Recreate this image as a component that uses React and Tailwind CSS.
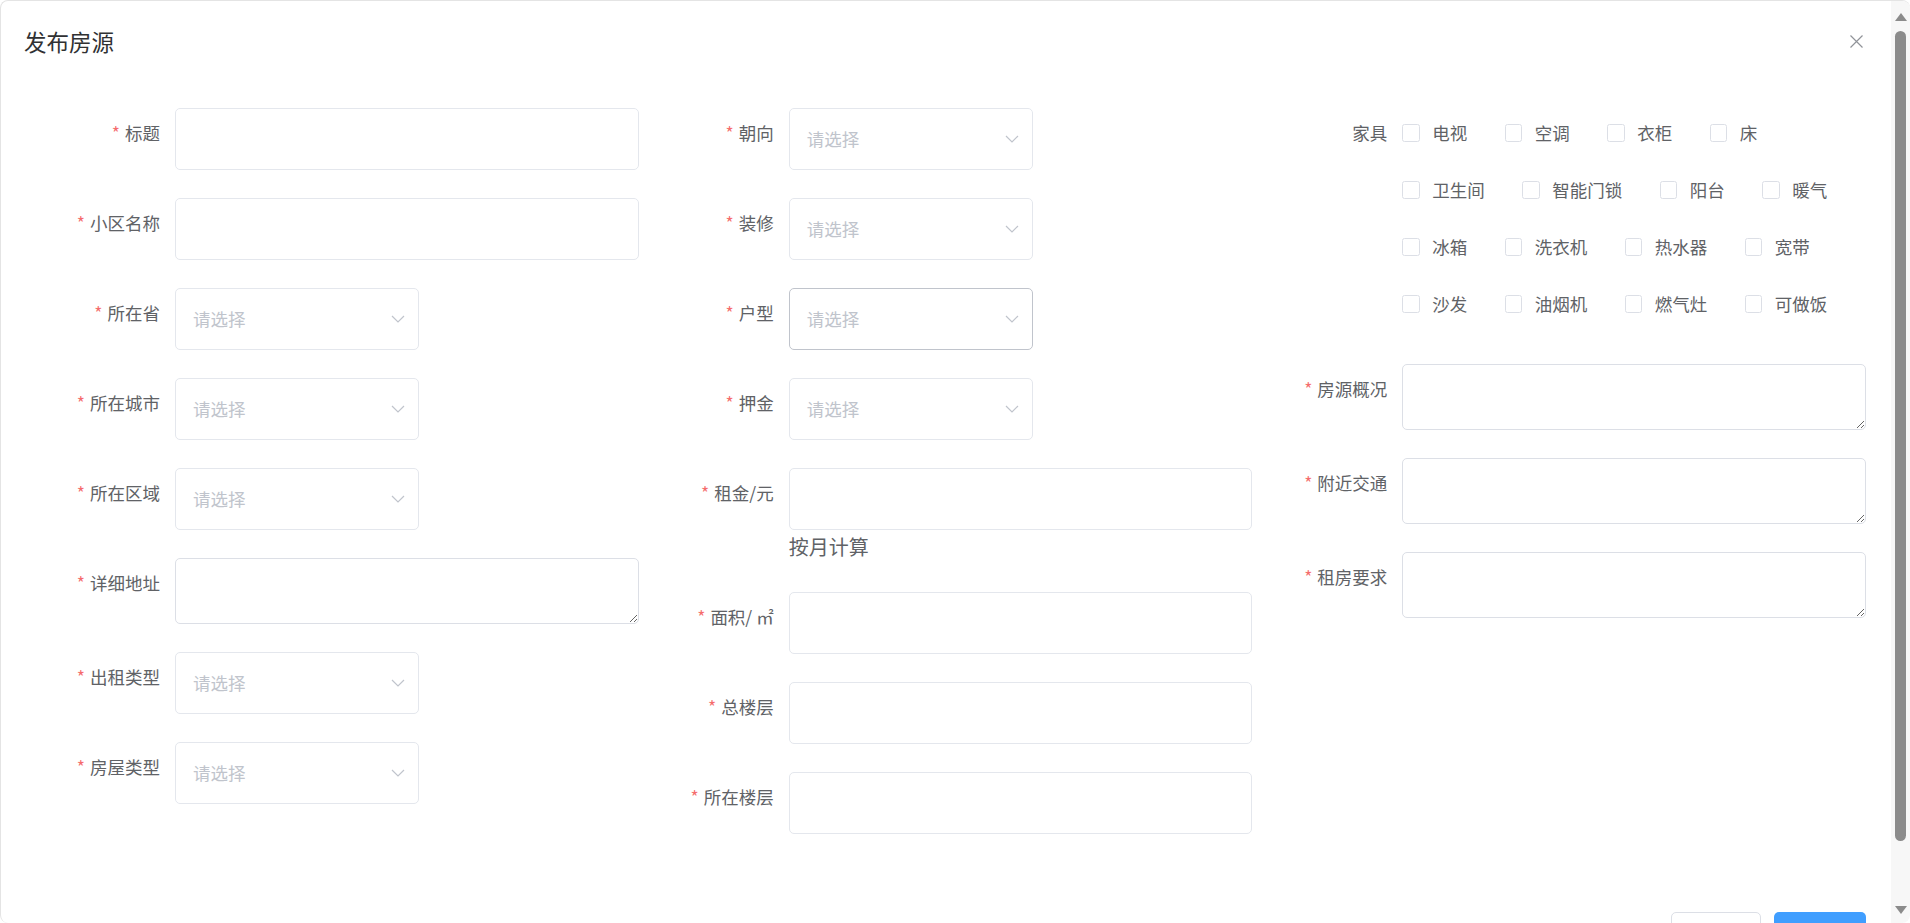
import React from "react";

const leftItems = [
  { label: "标题", type: "input" },
  { label: "小区名称", type: "input" },
  { label: "所在省", type: "select" },
  { label: "所在城市", type: "select" },
  { label: "所在区域", type: "select" },
  { label: "详细地址", type: "textarea" },
  { label: "出租类型", type: "select" },
  { label: "房屋类型", type: "select" },
];

const midItems = [
  { label: "朝向", type: "select" },
  { label: "装修", type: "select" },
  { label: "户型", type: "select", hover: true },
  { label: "押金", type: "select" },
  { label: "租金/元", type: "input", help: "按月计算" },
  { label: "面积/ ㎡", type: "input" },
  { label: "总楼层", type: "input" },
  { label: "所在楼层", type: "input" },
];

const furniture = [
  "电视", "空调", "衣柜", "床",
  "卫生间", "智能门锁", "阳台", "暖气",
  "冰箱", "洗衣机", "热水器", "宽带",
  "沙发", "油烟机", "燃气灶", "可做饭",
];

function Label({ text, required = true }) {
  return (
    <label className="w-[150px] shrink-0 text-right pr-[15px] leading-[50px] text-[17.5px] text-[#606266]">
      {required && <span className="text-[#f56c6c] mr-[5px]">*</span>}
      {text}
    </label>
  );
}

function Chevron() {
  return (
    <svg width="14" height="8" viewBox="0 0 14 8" fill="none">
      <polyline points="1,1 7,7 13,1" stroke="#c0c4cc" strokeWidth="1.2" />
    </svg>
  );
}

function Field({ item }) {
  return (
    <div className="flex mb-[28px]">
      <Label text={item.label} />
      <div className="flex-1 min-w-0">
        {item.type === "input" && (
          <input
            type="text"
            className="block w-full h-[62px] border border-[#e4e7ed] rounded-[5px] px-[19px] outline-none bg-white"
          />
        )}
        {item.type === "textarea" && (
          <textarea
            rows={2}
            className="block w-full h-[66px] border border-[#dcdfe6] rounded-[5px] px-[19px] py-[6px] outline-none bg-white"
          />
        )}
        {item.type === "select" && (
          <div
            className={
              item.hover
                ? "flex items-center justify-between w-[244px] h-[62px] border border-[#c0c4cc] rounded-[5px] pl-[17px] pr-[13px] bg-white"
                : "flex items-center justify-between w-[244px] h-[62px] border border-[#e4e7ed] rounded-[5px] pl-[17px] pr-[13px] bg-white"
            }
          >
            <span className="text-[17.5px] text-[#c0c4cc]">请选择</span>
            <Chevron />
          </div>
        )}
        {item.help && (
          <div className="leading-[34px] text-[20px] text-[#606266]">{item.help}</div>
        )}
      </div>
    </div>
  );
}

function Checkbox({ text }) {
  return (
    <label className="flex items-center h-[57px] pb-[7px] text-[17.5px] text-[#606266]">
      <span className="w-[17.5px] h-[17.5px] border border-[#dcdfe6] rounded-[2.5px] bg-white" />
      <span className="pl-[12.5px]">{text}</span>
    </label>
  );
}

export default function App() {
  return (
    <div className="w-[1910px] h-[923px] flex overflow-hidden rounded-[8px] border-t border-l border-[#e4e4e4] bg-white font-['Noto_Sans_CJK_SC',sans-serif]">
      <div className="flex-1 min-w-0 pl-[24px] pr-[25px]">
        {/* dialog header */}
        <div className="flex items-center justify-between pt-[25px]">
          <span className="-ml-[1px] text-[22.5px] leading-[30px] text-[#303133]">发布房源</span>
          <svg width="13" height="13" viewBox="0 0 13 13" className="mr-[3px]">
            <path d="M0.5 0.5 L12.5 12.5 M12.5 0.5 L0.5 12.5" stroke="#909399" strokeWidth="1.2" />
          </svg>
        </div>

        {/* form */}
        <div className="grid grid-cols-3 pt-[52px]">
          <div className="flex flex-col">
            {leftItems.map((it) => (
              <Field key={it.label} item={it} />
            ))}
          </div>
          <div className="flex flex-col">
            {midItems.map((it) => (
              <Field key={it.label} item={it} />
            ))}
          </div>
          <div className="flex flex-col">
            <div className="flex mb-[28px]">
              <Label text="家具" required={false} />
              <div className="flex-1 min-w-0 flex flex-wrap gap-x-[37.5px]">
                {furniture.map((f) => (
                  <Checkbox key={f} text={f} />
                ))}
              </div>
            </div>
            <Field item={{ label: "房源概况", type: "textarea" }} />
            <Field item={{ label: "附近交通", type: "textarea" }} />
            <Field item={{ label: "租房要求", type: "textarea" }} />
          </div>
        </div>

        {/* footer */}
        <div className="flex justify-end gap-[13px] pt-[50px]">
          <button className="w-[90px] h-[50px] border border-[#dcdfe6] rounded-[5px] bg-white text-[17.5px] text-[#606266]">
            取消
          </button>
          <button className="w-[92px] h-[50px] rounded-[5px] bg-[#409eff] text-[17.5px] text-white">
            确定
          </button>
        </div>
      </div>

      {/* scrollbar */}
      <div className="w-[19px] shrink-0 bg-[#f7f7f7] flex flex-col items-center">
        <svg width="12" height="8" viewBox="0 0 12 8" className="mt-[12px]">
          <polygon points="6,0 12,8 0,8" fill="#8b8b8b" />
        </svg>
        <div className="mt-[10px] w-[11px] h-[810px] rounded-full bg-[#8b8b8b]" />
        <div className="flex-1" />
        <svg width="12" height="8" viewBox="0 0 12 8" className="mb-[9px]">
          <polygon points="0,0 12,0 6,8" fill="#8b8b8b" />
        </svg>
      </div>
    </div>
  );
}
